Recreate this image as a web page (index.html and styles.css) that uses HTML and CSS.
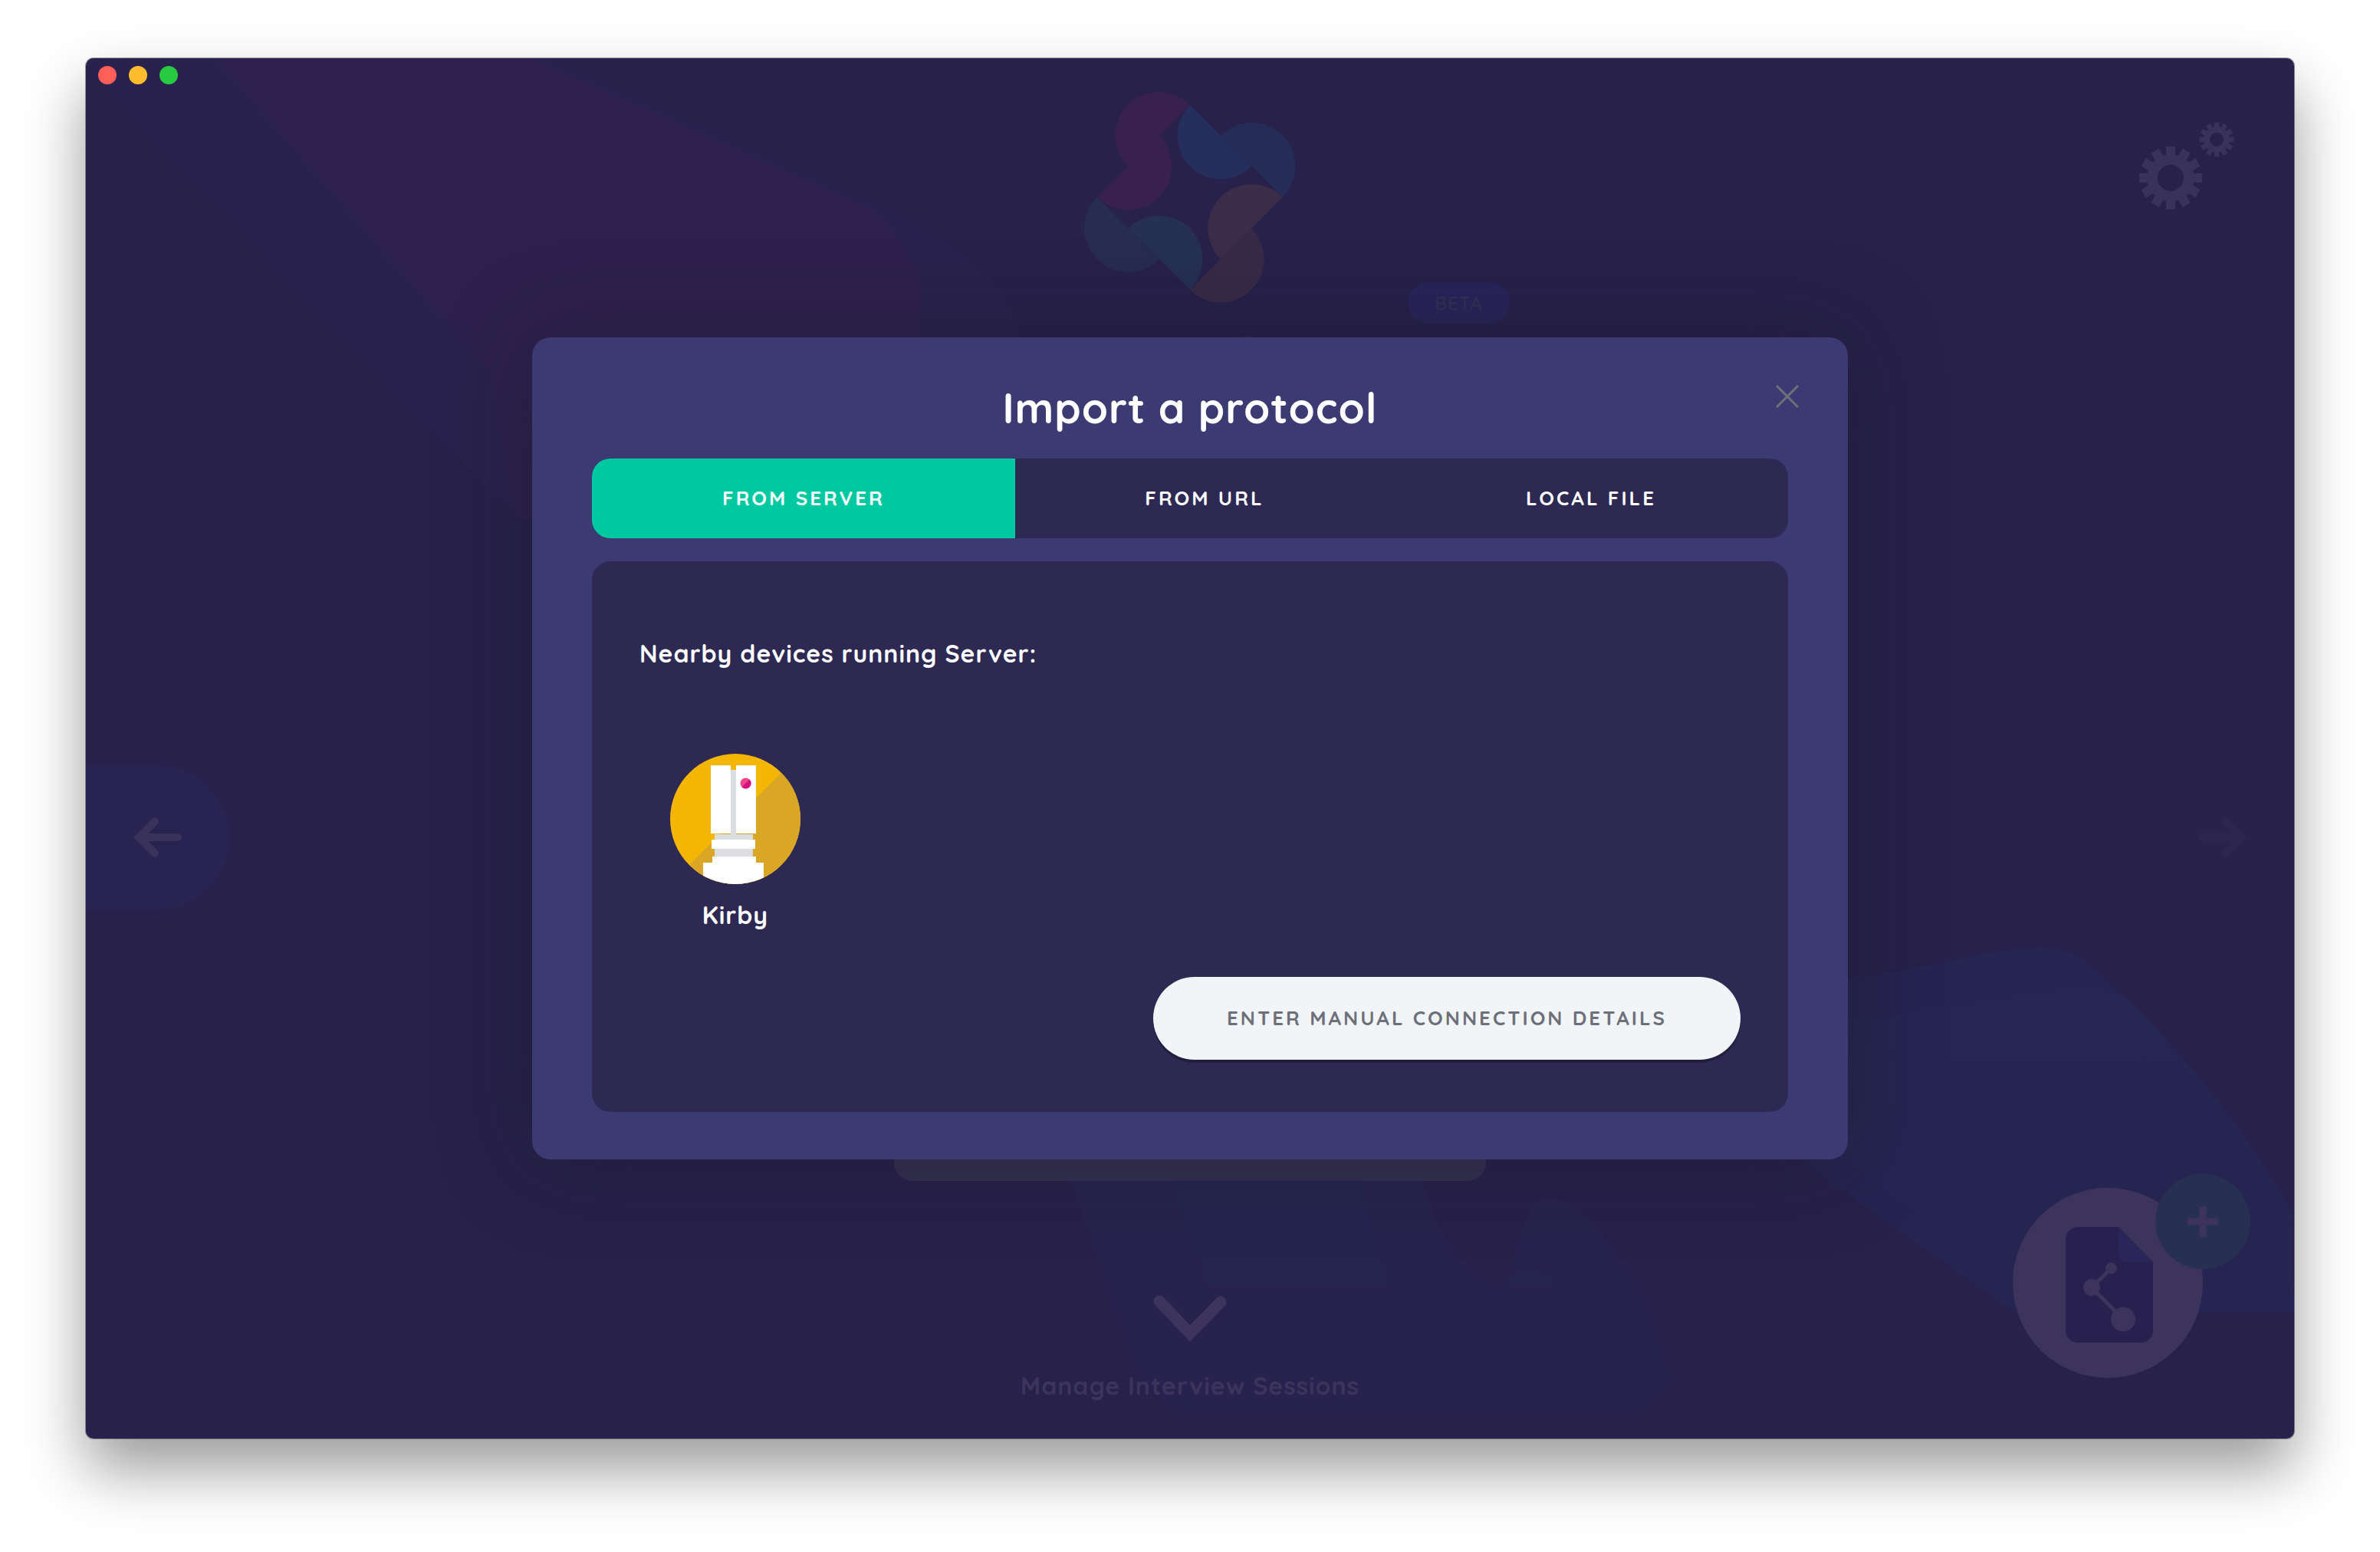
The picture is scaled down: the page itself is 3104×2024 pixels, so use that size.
FILE: index.html
```html
<!DOCTYPE html>
<html lang="en">
<head>
<meta charset="utf-8">
<title>Import a protocol</title>
<link rel="stylesheet" href="styles.css">
</head>
<body>
<div class="window">
  <svg class="scenery" viewBox="0 0 2880 1800" preserveAspectRatio="xMidYMid slice" aria-hidden="true">
    <defs>
      <linearGradient id="pink" x1="1" y1="0" x2="0.3" y2="1">
        <stop offset="0" stop-color="#2f214f"/>
        <stop offset="1" stop-color="#2d214e"/>
      </linearGradient>
      <linearGradient id="sea" x1="0" y1="0" x2="0" y2="1">
        <stop offset="0" stop-color="#252653"/>
        <stop offset="1" stop-color="#262552"/>
      </linearGradient>
    </defs>
    <path fill="#29224e" d="M0 0H600L1060 205Q1190 275 1215 340V600H560L20 34Z"/>
    <path fill="url(#pink)" d="M170 0H580L1020 195Q1075 235 1090 300V600H560L525 408Z"/>
    <path fill="#262451" d="M2290 1200C2400 1190 2480 1158 2550 1159C2580 1160 2595 1165 2615 1183Q2780 1330 2876 1501L2880 1636H2515L2240 1440Z"/>
    <path fill="url(#sea)" d="M2290 1256C2420 1245 2530 1211 2610 1212Q2640 1213 2660 1224Q2790 1350 2880 1514V1514H2390L2240 1380Z"/>
    <path fill="#28234e" d="M1275 1440L1373 1717L1420 1765H2030L2068 1727Q2040 1600 1990 1550Q1950 1486 1906 1486Q1880 1490 1868 1544Q1862 1590 1843 1599Q1780 1590 1735 1440Z"/>
    <path fill="#252650" d="M1406 1440L1464 1599H1696L1656 1440Z"/>
    <path fill="#25264f" d="M1857 1599Q1866 1581 1878 1581Q1896 1583 1912 1599Z"/>
    <ellipse fill="#2d2744" cx="1514" cy="368" rx="14" ry="6"/>
  </svg>

  <div class="lights">
    <button class="light light-close" aria-label="Close window"></button>
    <button class="light light-min" aria-label="Minimise window"></button>
    <button class="light light-max" aria-label="Zoom window"></button>
  </div>

  <main class="start">
    <header class="top">
      <div class="brand">
        <svg width="278" height="278" viewBox="0 0 278 278" aria-hidden="true">
          <path fill="#38214e" d="M139 18A56 56 0 0 0 58 98L18 138A56 56 0 0 0 99 58Z"/>
          <path fill="#252c57" d="M179 58A56 56 0 0 1 260 138L219 98Z"/>
          <path fill="#262e5c" d="M139 18A56 56 0 0 0 219 98L179 58Z"/>
          <path fill="#372a48" d="M179 219L139 259A56 56 0 0 0 219 179Z"/>
          <path fill="#3b2d4a" d="M260 138A56 56 0 0 0 179 219L219 179Z"/>
          <path fill="#272c50" d="M18 138A56 56 0 0 0 99 219L58 179Z"/>
          <path fill="#263053" d="M58 179A56 56 0 0 1 139 259L99 219Z"/>
        </svg>
        <span class="beta">BETA</span>
      </div>
      <button class="settings" aria-label="Settings">
        <svg width="124" height="116" viewBox="0 0 124 116" fill="none" stroke="#39325b" aria-hidden="true">
          <g transform="translate(41 73)">
            <circle r="24" stroke-width="14"/>
            <g stroke-width="12">
              <path d="M0-41V-28M0 28V41M-41 0H-28M28 0H41"/>
              <path transform="rotate(30)" d="M0-41V-28M0 28V41M-41 0H-28M28 0H41"/>
              <path transform="rotate(60)" d="M0-41V-28M0 28V41M-41 0H-28M28 0H41"/>
            </g>
          </g>
          <g transform="translate(101 23)">
            <circle r="13" stroke-width="8"/>
            <g stroke-width="6.500">
              <path d="M0-22.500V-15M0 15V22.500M-22.500 0H-15M15 0H22.500"/>
              <path transform="rotate(30)" d="M0-22.500V-15M0 15V22.500M-22.500 0H-15M15 0H22.500"/>
              <path transform="rotate(60)" d="M0-22.500V-15M0 15V22.500M-22.500 0H-15M15 0H22.500"/>
            </g>
          </g>
        </svg>
      </button>
    </header>

    <div class="middle">
      <button class="nav nav-prev" aria-label="Previous">
        <svg width="64" height="56" viewBox="0 0 64 56" fill="none" stroke="currentColor" stroke-width="10" stroke-linecap="round" aria-hidden="true"><path d="M58 28H10M28 7L7 28L28 49"/></svg>
      </button>
      <div class="protocol-card"></div>
      <button class="nav nav-next" aria-label="Next">
        <svg width="64" height="56" viewBox="0 0 64 56" fill="none" stroke="currentColor" stroke-width="10" stroke-linecap="round" aria-hidden="true"><path d="M6 28H54M36 7L57 28L36 49"/></svg>
      </button>
    </div>

    <footer class="bottom">
      <button class="manage">
        <svg width="96" height="64" viewBox="0 0 96 64" fill="none" stroke="currentColor" stroke-width="15" stroke-linecap="round" aria-hidden="true"><path d="M8 8L48 50L88 9"/></svg>
        <span>Manage Interview Sessions</span>
      </button>
      <button class="add" aria-label="Add a protocol">
        <svg width="114" height="152" viewBox="0 0 114 152" aria-hidden="true">
          <path fill="#28214f" d="M16 0H69L114 46V136A16 16 0 0 1 98 151H16A16 16 0 0 1 0 136V16A16 16 0 0 1 16 0Z"/>
          <path fill="#2b2659" d="M69 0L114 46H81A12 12 0 0 1 69 34Z"/>
          <g fill="#3c345c" stroke="#3c345c" stroke-width="5">
            <path d="M59.500 54L34 79L75 120.500" fill="none"/>
            <circle cx="59.500" cy="54" r="7.500" stroke="none"/>
            <circle cx="34" cy="79" r="11" stroke="none"/>
            <circle cx="75" cy="120.500" r="16" stroke="none"/>
          </g>
        </svg>
        <span class="add-badge">
          <svg width="40" height="40" viewBox="0 0 40 40" stroke="#3c345c" stroke-width="9" aria-hidden="true"><path d="M20 0V40M0 20H40"/></svg>
        </span>
      </button>
    </footer>
  </main>

  <div class="overlay">
    <section class="modal" role="dialog" aria-labelledby="modal-title">
      <h1 class="modal-title" id="modal-title">Import a protocol</h1>
      <button class="modal-close" aria-label="Close">
        <svg width="30" height="30" viewBox="0 0 30 30" stroke="#6d7079" stroke-width="3" aria-hidden="true"><path d="M1 1L29 29M29 1L1 29"/></svg>
      </button>
      <div class="tabs" role="tablist">
        <button class="tab tab-active" role="tab" aria-selected="true">FROM SERVER</button>
        <button class="tab" role="tab" aria-selected="false">FROM URL</button>
        <button class="tab" role="tab" aria-selected="false">LOCAL FILE</button>
      </div>
      <div class="panel" role="tabpanel">
        <h2 class="panel-title">Nearby devices running Server:</h2>
        <button class="device">
          <svg width="170" height="170" viewBox="0 0 170 170" aria-hidden="true">
            <clipPath id="disc"><circle cx="85" cy="85" r="85"/></clipPath>
            <g clip-path="url(#disc)">
              <path fill="#f3b703" d="M0 0H170V170H0Z"/>
              <path fill="#d9a626" d="M170 0V170H0Z"/>
              <path fill="#dcdde0" d="M79 21H86V105H108V134H58V105H79Z"/>
              <path fill="#fff" d="M53 15H79V104H53ZM86 15H112V104H86ZM54 112H111V124H54ZM55 134H112V142H122V170H43V142H55Z"/>
              <circle cx="98.500" cy="38.500" r="7" fill="#ec468c"/>
              <path fill="#d6127f" d="M103.500 33.500A7 7 0 0 1 93.500 43.500Z"/>
            </g>
          </svg>
          <span>Kirby</span>
        </button>
        <button class="manual">ENTER MANUAL CONNECTION DETAILS</button>
      </div>
    </section>
  </div>
</div>
</body>
</html>
```
FILE: styles.css
```css
* { box-sizing: border-box; }

body {
  margin: 0;
  min-height: 100vh;
  padding: 76px 112px 148px;
  display: flex;
  background: #fff;
  font-family: Quicksand, Lato, sans-serif;
  font-size: 32px;
  line-height: 40px;
  font-weight: 700;
  letter-spacing: 1px;
}

button {
  margin: 0;
  padding: 0;
  border: 0;
  background: none;
  color: inherit;
  font: inherit;
  letter-spacing: inherit;
  cursor: pointer;
}

svg { display: block; }

.window {
  position: relative;
  flex: 1;
  display: flex;
  overflow: hidden;
  border-radius: 10px;
  background: #27214b;
  box-shadow: 0 0 0 1px rgba(60, 55, 80, 0.5), 0 40px 80px rgba(0, 0, 0, 0.4);
}

.scenery {
  position: absolute;
  inset: 0;
  width: 100%;
  height: 100%;
}

.lights {
  position: absolute;
  top: 10px;
  left: 16px;
  display: flex;
  gap: 16px;
}

.light { width: 24px; height: 24px; border-radius: 50%; }
.light-close { background: #ff5f57; }
.light-min { background: #ffbd2e; }
.light-max { background: #28ca41; }

/* Start screen, dimmed behind the dialog */
.start {
  position: relative;
  flex: 1;
  display: flex;
  flex-direction: column;
}

.top {
  display: grid;
  grid-template-columns: 1fr auto 1fr;
  align-items: start;
  min-height: 568px;
  padding: 43px 78px 0;
}

.brand { position: relative; grid-column: 2; }

.beta {
  position: absolute;
  left: 423px;
  top: 249px;
  width: 133px;
  height: 54px;
  border-radius: 27px;
  background: #29245a;
  color: #352e57;
  font-size: 24px;
  font-weight: 600;
  line-height: 54px;
  text-align: center;
}

.settings { justify-self: end; margin-top: 40px; }

.middle {
  flex: 1;
  display: flex;
  justify-content: space-between;
  align-items: center;
}

.nav {
  width: 188px;
  height: 188px;
  display: flex;
  align-items: center;
}

.nav-prev {
  justify-content: flex-start;
  padding-left: 62px;
  border-radius: 0 94px 94px 0;
  background: #292351;
  color: #39325b;
}

.nav-next {
  justify-content: flex-end;
  padding-right: 62px;
  border-radius: 94px 0 0 94px;
  background: #28224d;
  color: #2d2650;
}

.protocol-card {
  align-self: stretch;
  width: 772px;
  border-radius: 24px;
  background: #343053;
}

.bottom {
  display: grid;
  grid-template-columns: 1fr auto 1fr;
  align-items: start;
  min-height: 336px;
  padding: 9px 119px 0;
}

.manage {
  grid-column: 2;
  display: flex;
  flex-direction: column;
  align-items: center;
  gap: 34px;
  margin-top: 140px;
  color: #3c345c;
}

.add {
  position: relative;
  justify-self: end;
  display: grid;
  place-items: center;
  width: 248px;
  height: 248px;
  padding: 6px 0 0 4px;
  border-radius: 50%;
  background: #3c345c;
}

.add-badge {
  position: absolute;
  top: -18px;
  right: -62px;
  display: grid;
  place-items: center;
  width: 124px;
  height: 124px;
  border-radius: 50%;
  background: #273053;
}

/* Dialog */
.overlay {
  position: absolute;
  inset: 0;
  display: flex;
  align-items: center;
  justify-content: center;
}

.modal {
  position: relative;
  width: 100%;
  max-width: 1716px;
  padding: 56px 78px 62px;
  border-radius: 24px;
  background: #3b3a73;
  box-shadow: 0 0 120px rgba(20, 20, 20, 0.34);
  color: #fff;
}

.modal-title {
  margin: 0 0 30px;
  font-size: 55px;
  line-height: 72px;
  text-align: center;
}

.modal-close {
  position: absolute;
  top: 57px;
  right: 59px;
  width: 40px;
  height: 40px;
  display: grid;
  place-items: center;
}

.tabs {
  display: grid;
  grid-template-columns: 552fr 494fr 514fr;
  margin-bottom: 30px;
  border-radius: 24px;
  overflow: hidden;
  background: #2d2953;
}

.tab {
  height: 104px;
  font-size: 26px;
  letter-spacing: 3px;
}

.tab-active { background: #00c9a2; }

.panel {
  display: flex;
  flex-direction: column;
  align-items: flex-start;
  padding: 100px 62px 68px;
  border-radius: 24px;
  background: #2d2953;
}

.panel-title {
  margin: 0 0 111px;
  font-size: 32px;
}

.device {
  display: flex;
  flex-direction: column;
  align-items: center;
  gap: 20px;
  margin-bottom: 61px;
  padding: 0 40px;
}

.manual {
  align-self: flex-end;
  height: 108px;
  width: 766px;
  border-radius: 54px;
  background: #f2f5f7;
  box-shadow: 0 4px 0 #231e40;
  color: #6d7079;
  font-size: 26px;
  letter-spacing: 3px;
}
```
